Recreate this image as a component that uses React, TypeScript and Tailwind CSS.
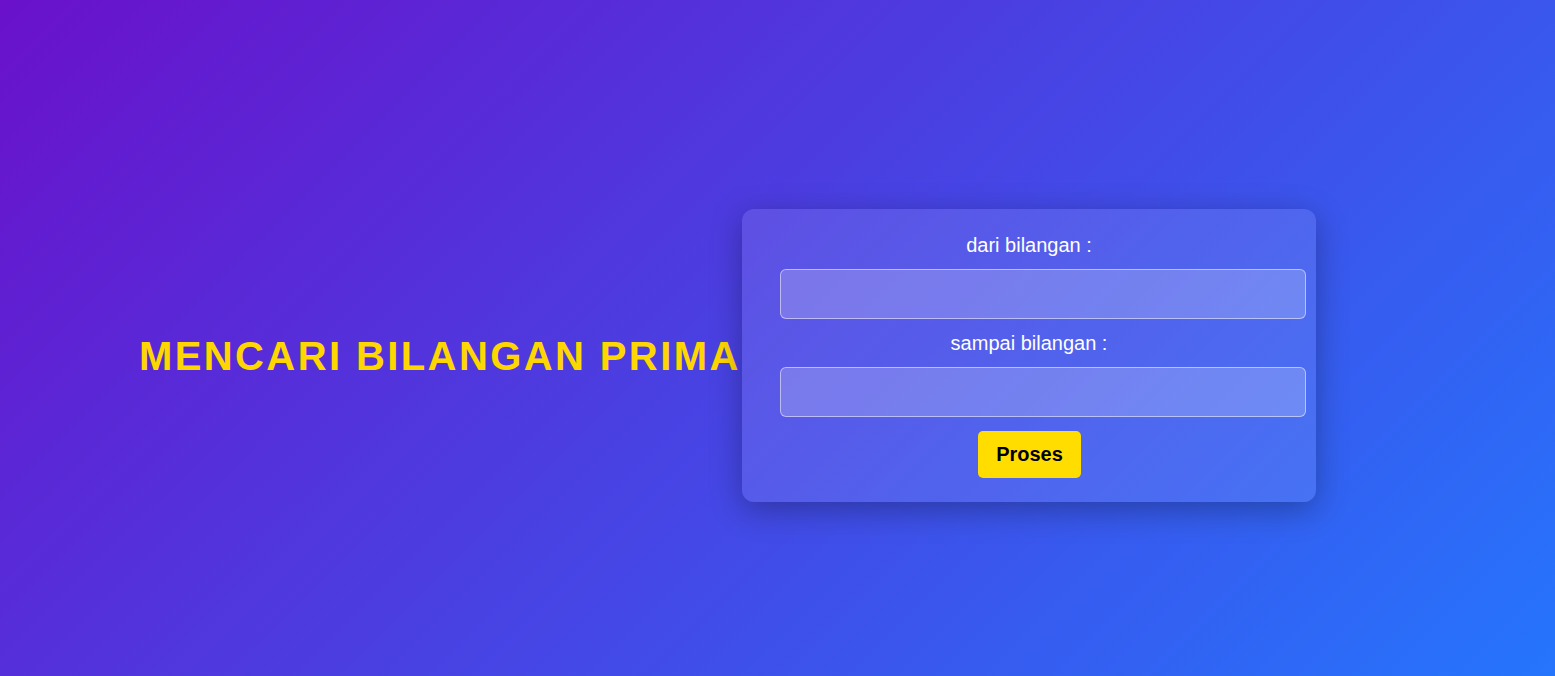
import { useState } from "react";

// Halaman pencari bilangan prima
export default function App() {
  const [dari, setDari] = useState("");
  const [sampai, setSampai] = useState("");

  return (
    <div
      className="min-h-screen w-full flex items-center pt-[35px] pl-[139px] bg-[linear-gradient(135deg,#6a11cb,#2575fc)]"
      style={{ fontFamily: '"Liberation Sans", Arial, sans-serif' }}
    >
      {/* Judul */}
      <div className="w-[603px] shrink-0">
        <h1 className="text-[40px] leading-[46px] font-bold tracking-[2.4px] text-[#ffd700] whitespace-nowrap">
          MENCARI BILANGAN PRIMA
        </h1>
      </div>

      {/* Form */}
      <div className="w-[574px] shrink-0 rounded-xl bg-white/10 shadow-[0_8px_32px_rgba(0,0,0,0.3)] flex flex-col items-center gap-[14px] pt-[26px] pb-[24px]">
        <label className="text-[20px] leading-[20px] text-white">dari bilangan :</label>
        <input
          type="text"
          value={dari}
          onChange={(e) => setDari(e.target.value)}
          className="ml-[38px] self-start w-[526px] h-[50px] rounded-[6px] border border-white/50 bg-white/20 px-3 text-white outline-none"
        />
        <label className="text-[20px] leading-[20px] text-white">sampai bilangan :</label>
        <input
          type="text"
          value={sampai}
          onChange={(e) => setSampai(e.target.value)}
          className="ml-[38px] self-start w-[526px] h-[50px] rounded-[6px] border border-white/50 bg-white/20 px-3 text-white outline-none"
        />
        <button className="ml-[1px] px-[18.5px] py-[12px] text-[20px] leading-[23px] font-bold text-black bg-[#ffdd00] rounded-[5px]">
          Proses
        </button>
      </div>
    </div>
  );
}
